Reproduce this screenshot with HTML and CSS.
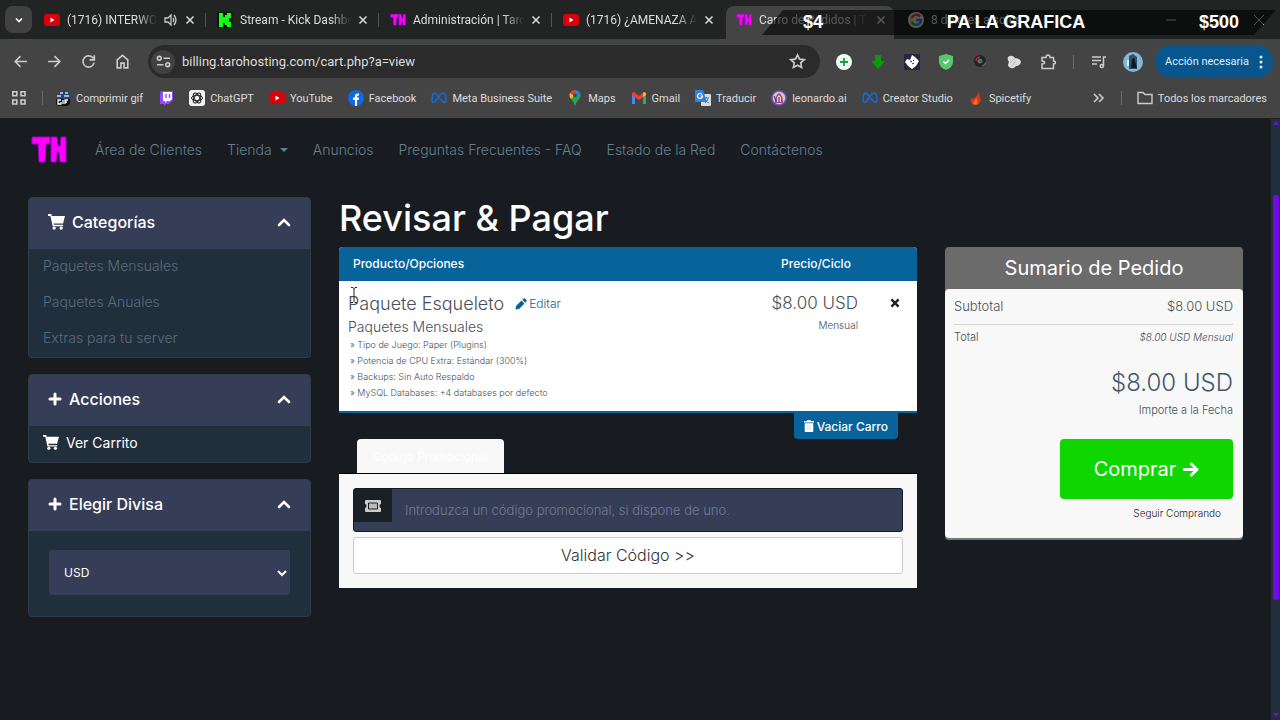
FILE: index.html
```html
<!DOCTYPE html>
<html lang="es">
<head>
    <meta charset="UTF-8">
    <meta name="viewport" content="width=device-width, initial-scale=1.0">
    <title>Carro de Pedidos | TaroHosting</title>
    <link rel="stylesheet" href="styles.css">
</head>
<body>
    <svg class="sprite" aria-hidden="true">
        <symbol id="youtube" viewBox="0 0 16 16"><rect y="2" width="16" height="12" rx="3" fill="#d9000c"/><path d="M6.500 5.500v5l4-2.500z" fill="#fff"/></symbol>
        <symbol id="th" viewBox="0 0 36 28"><path d="M1 1h18v7h-4l-1 18H8L7 8H1zM20 1h6l1 9h2l1-9h5v25h-6l-1-10h-2l-1 10h-5z" fill="#f0f" stroke="#90c" stroke-width="1"/></symbol>
        <symbol id="close" viewBox="0 0 10 10"><path d="M1.500 1.500l7 7M8.500 1.500l-7 7" fill="none" stroke="currentColor" stroke-width="1.500"/></symbol>
        <symbol id="meta" viewBox="0 0 16 16"><path d="M8 8C6 4.500 5 3 3.700 3 2 3 1 6.500 1 9.500c0 3.500 2.500 3.500 4 1L8 6c1.300-2 2.500-3 3.700-3C14 3 15 6.500 15 9.500c0 3.500-2.500 3.500-4 1z" fill="none" stroke="#1668d8" stroke-width="1.600"/></symbol>
        <symbol id="cart" viewBox="0 0 18 17"><path d="M0 0h3.500l.6 2H18l-2 8H6l.4 1.500H16V13H5L2.500 2H0z"/><circle cx="6.500" cy="15" r="1.800"/><circle cx="14" cy="15" r="1.800"/></symbol>
        <symbol id="plus" viewBox="0 0 14 14"><path d="M7 2v10M2 7h10" fill="none" stroke="currentColor" stroke-width="3" stroke-linecap="round"/></symbol>
        <symbol id="up" viewBox="0 0 14 10"><path d="M2 8l5-5 5 5" fill="none" stroke="currentColor" stroke-width="2.600" stroke-linecap="round"/></symbol>
    </svg>

    <header class="browser">
        <div class="tabs">
            <button class="tab-search" aria-label="Buscar pestañas"><svg viewBox="0 0 10 10" width="10" height="10"><path d="M2 3.500l3 3 3-3" fill="none" stroke="#fff" stroke-width="1.600"/></svg></button>
            <div class="tab">
                <svg class="fav"><use href="#youtube"/></svg>
                <span class="tab-title">(1716) INTERWORLD</span>
                <svg class="sound" viewBox="0 0 14 14"><path d="M1 5h3l3-3v10L4 9H1z" fill="none" stroke="#ccc" stroke-width="1.300"/><path d="M9 5q1.500 2 0 4M10 2q4 5 0 10" fill="none" stroke="#ccc" stroke-width="1.300"/></svg>
                <button class="tab-close" aria-label="Cerrar"><svg><use href="#close"/></svg></button>
            </div>
            <div class="tab">
                <svg class="fav" viewBox="0 0 16 16"><rect width="16" height="16" rx="2" fill="#0b160b"/><path d="M2 1h4v4h2V3h2V1h4v5h-2v4h2v5h-4v-2H8v-2H6v4H2z" fill="#1f1"/></svg>
                <span class="tab-title">Stream - Kick Dashboard</span>
                <button class="tab-close" aria-label="Cerrar"><svg><use href="#close"/></svg></button>
            </div>
            <div class="tab">
                <svg class="fav"><use href="#th"/></svg>
                <span class="tab-title">Administración | TaroHosting</span>
                <button class="tab-close" aria-label="Cerrar"><svg><use href="#close"/></svg></button>
            </div>
            <div class="tab">
                <svg class="fav"><use href="#youtube"/></svg>
                <span class="tab-title">(1716) ¿AMENAZA ALIEN</span>
                <button class="tab-close" aria-label="Cerrar"><svg><use href="#close"/></svg></button>
            </div>
            <div class="tab active">
                <svg class="fav"><use href="#th"/></svg>
                <span class="tab-title">Carro de Pedidos | TaroHosting</span>
                <button class="tab-close" aria-label="Cerrar"><svg><use href="#close"/></svg></button>
            </div>
            <div class="tab last">
                <svg class="fav" viewBox="0 0 16 16"><circle cx="8" cy="8" r="8" fill="#ddd"/><g fill="none" stroke-width="2.400"><path d="M12 4.500A5 5 0 0 0 3.600 6" stroke="#e33"/><path d="M3.600 6a5 5 0 0 0 0 4" stroke="#fb0"/><path d="M3.600 10a5 5 0 0 0 7.400 2" stroke="#2a4"/><path d="M8 8h5q0 2.500-2 4" stroke="#37e"/></g></svg>
                <span class="tab-title">8 dolares a soles</span>
            </div>
            <button class="new-tab" aria-label="Nueva pestaña"><svg viewBox="0 0 10 10"><path d="M5 0v10M0 5h10" stroke="#bbb"/></svg></button>
            <div class="window-buttons">
                <button aria-label="Minimizar"><svg viewBox="0 0 10 10"><path d="M0 5h10" stroke="#ccc"/></svg></button>
                <button aria-label="Maximizar"><svg viewBox="0 0 10 10"><path d="M.5.5h9v9h-9z" fill="none" stroke="#ccc"/></svg></button>
                <button aria-label="Cerrar"><svg viewBox="0 0 10 10"><path d="M0 0l10 10M10 0L0 10" stroke="#ccc"/></svg></button>
            </div>
            <!-- stream donation goal -->
            <div class="goal">
                <span>$4</span>
                <span class="goal-name">PA LA GRAFICA</span>
                <span>$500</span>
            </div>
        </div>

        <div class="toolbar">
            <button class="tool" aria-label="Atrás"><svg viewBox="0 0 16 16"><path d="M14 8H3M8 3L3 8l5 5"/></svg></button>
            <button class="tool" aria-label="Adelante"><svg viewBox="0 0 16 16"><path d="M2 8h11M8 3l5 5-5 5"/></svg></button>
            <button class="tool" aria-label="Recargar"><svg viewBox="0 0 16 16"><path d="M12.500 5A5.300 5.300 0 1 0 13.300 9M13.500 2v4.500H9"/></svg></button>
            <button class="tool" aria-label="Inicio"><svg viewBox="0 0 16 16"><path d="M3 14V6.500l5-4.300 5 4.300V14H9.500V9.500h-3V14z"/></svg></button>
            <div class="omnibox">
                <button class="site-info" aria-label="Información del sitio"><svg viewBox="0 0 16 16"><circle cx="4" cy="5" r="1.800"/><path d="M8 5h6M2 11h6"/><circle cx="12" cy="11" r="1.800"/></svg></button>
                <input class="url" type="text" aria-label="Dirección" value="billing.tarohosting.com/cart.php?a=view">
                <button class="star" aria-label="Guardar en marcadores"><svg viewBox="0 0 16 16"><path d="M8 1.800l1.900 4 4.400.5-3.300 3 .9 4.400L8 11.500l-3.900 2.200.9-4.400-3.300-3 4.400-.5z"/></svg></button>
            </div>
            <div class="extensions">
                <svg viewBox="0 0 16 16"><circle cx="8" cy="8" r="8" fill="#eefcf0"/><path d="M8 4v8M4 8h8" stroke="#1a9c4a" stroke-width="1.800"/></svg>
                <svg viewBox="0 0 16 16"><path d="M5 1h6v6h4l-7 8-7-8h4z" fill="#0b9a08"/></svg>
                <svg viewBox="0 0 16 16"><rect width="16" height="16" fill="#292641"/><path d="M8 1l3 2 4 4-3 5-4 3-4-3-3-4 2-3 3 1z" fill="#fff"/><path d="M6 7l2 1M9 6l1 1M8 10l2-1" stroke="#292641"/></svg>
                <svg viewBox="0 0 16 16"><path d="M8 0l7 2v6q0 5-7 8-7-3-7-8V2z" fill="#58c66c"/><path d="M5.500 7.500l2 2 3.500-3.500" fill="none" stroke="#fff" stroke-width="1.400"/></svg>
                <svg viewBox="0 0 16 16"><circle cx="8" cy="7" r="6" fill="#222"/><path d="M4 7a4 4 0 0 1 4-4" fill="none" stroke="#d22" stroke-width="1.500"/><circle cx="8" cy="7" r="2.500" fill="#45716e"/><path d="M10 12q3-1 4-4" fill="none" stroke="#777"/></svg>
                <svg viewBox="0 0 16 16"><path d="M2 3q4-3 7 1 5 0 6 4-1 4-5 4-3 4-7 1-2-2 0-5-2-3-1-5z" fill="#ddd"/><path d="M4 9l5-5M6 12l4-5" stroke="#bbb"/></svg>
                <svg viewBox="0 0 16 16" class="outline"><path d="M2 3.500h4q0-2.500 2-2.500t2 2.500h3.500V7q2 0 2 1.500t-2 1.500v4.500H2V10q2.500 0 2.500-1.500T2 7z"/></svg>
                <span class="sep"></span>
                <svg viewBox="0 0 16 16" class="outline"><path d="M1 3h9M1 6.500h9M1 10h5M12.500 12V3H15"/><circle cx="10.800" cy="12" r="1.600"/></svg>
                <svg viewBox="0 0 20 20" class="avatar"><circle cx="10" cy="10" r="10" fill="#80b9d9"/><path d="M6 4l4-2 4 3v12H6z" fill="#315067"/><path d="M9 7q3-3 3 2l2 7H8z" fill="#101820"/><path d="M5 8v6" stroke="#d8f0f8" stroke-width="2"/></svg>
            </div>
            <button class="action">Acción necesaria <svg viewBox="0 0 4 16"><circle cx="2" cy="3" r="1.500"/><circle cx="2" cy="8" r="1.500"/><circle cx="2" cy="13" r="1.500"/></svg></button>
        </div>

        <nav class="bookmarks">
            <button class="apps" aria-label="Aplicaciones"><svg viewBox="0 0 16 16"><path d="M1.800 1.800h4v4h-4zM10 1.800h4v4h-4zM1.800 10h4v4h-4zM10 10h4v4h-4z" fill="none" stroke="#ccc" stroke-width="1.600"/></svg></button>
            <span class="sep"></span>
            <a href="#"><svg viewBox="0 0 16 16"><path d="M4 1h10v8H4z" fill="#24426e"/><path d="M5 3h3M10 3h3M2 6h4M9 6h5" stroke="#9db7da" stroke-width="2"/><path d="M1 9h14v5l-3 2H3l-2-2z" fill="#111"/><path d="M6 10H3v4h3v-2M8 10v4M13 10h-3v4M10 12h2" fill="none" stroke="#fff" stroke-width="1.300"/></svg>Comprimir gif</a>
            <a href="#" aria-label="Twitch"><svg viewBox="0 0 16 16"><path d="M3 1h12v9l-4 4H8l-2 2v-2H2V4z" fill="#9146ff"/><path d="M5 2h9v7l-2 2H9l-2 2v-2H5z" fill="#fff"/><path d="M8 4v4M11.500 4v4" stroke="#9146ff" stroke-width="1.400"/></svg></a>
            <a href="#"><svg viewBox="0 0 16 16"><rect width="16" height="16" rx="3" fill="#f2f2f2"/><g fill="none" stroke="#222"><ellipse cx="8" cy="8" rx="5.500" ry="2.700"/><ellipse cx="8" cy="8" rx="5.500" ry="2.700" transform="rotate(60 8 8)"/><ellipse cx="8" cy="8" rx="5.500" ry="2.700" transform="rotate(120 8 8)"/></g></svg>ChatGPT</a>
            <a href="#"><svg><use href="#youtube"/></svg>YouTube</a>
            <a href="#"><svg viewBox="0 0 16 16"><circle cx="8" cy="8" r="8" fill="#1269e8"/><path d="M7 16v-6H5V7.500h2V6q0-3 4-2.500v2q-2-.2-2 1v1h2L10.600 10H9v6z" fill="#fff"/></svg>Facebook</a>
            <a href="#"><svg><use href="#meta"/></svg>Meta Business Suite</a>
            <a href="#"><svg viewBox="0 0 16 16"><path d="M8 0a5.500 5.500 0 0 0-5 3l5 3z" fill="#e33b2e"/><path d="M8 0a5.500 5.500 0 0 1 5 3L8 6z" fill="#2f7de8"/><path d="M3 3q-1.500 3 1 6l4-3z" fill="#fbbc04"/><path d="M13 3q1.500 3-1 6-3 3-4 7-1-4-4-7l4-3z" fill="#28a84c"/><circle cx="8" cy="5.500" r="2" fill="#184fa5"/></svg>Maps</a>
            <a href="#"><svg viewBox="0 0 16 16"><path d="M1 4h3v10H1z" fill="#4285f4"/><path d="M12 4h3v10h-3z" fill="#34a853"/><path d="M1 3l2-1 5 4 5-4 2 1v2L8 10 1 5z" fill="#ea4335"/><path d="M12 3l1-1 2 1v2l-3 2z" fill="#fbbc04"/></svg>Gmail</a>
            <a href="#"><svg viewBox="0 0 16 16"><rect x="6" y="4" width="10" height="12" rx="1" fill="#d8dadd"/><path d="M9 8h5M11.500 7v1M10 13q3-2 3-5M10 9q1 3 4 4" fill="none" stroke="#657b91"/><path d="M1 0h7l4 12H1q-1 0-1-1V1q0-1 1-1z" fill="#2e82e4"/><path d="M7 4.500A2.500 2.500 0 1 0 7.500 6H5.500" fill="none" stroke="#fff" stroke-width="1.200"/></svg>Traducir</a>
            <a href="#"><svg viewBox="0 0 16 16"><circle cx="8" cy="8" r="7" fill="#d9c7c5" stroke="#6c54bb" stroke-width="1.500"/><path d="M4 13q0-8 4-10 4 2 4 10" fill="#a33ba7"/><path d="M6 12V7l2-2 2 2v5z" fill="#ead294"/><path d="M8 7v5M3 6l2 5" stroke="#27355d"/></svg>leonardo.ai</a>
            <a href="#"><svg><use href="#meta"/></svg>Creator Studio</a>
            <a href="#"><svg viewBox="0 0 16 16"><path d="M11 1q0 4 1 6 2 6-3 8-8 1-6-7l2 1q4-2 6-8z" fill="#d93715"/><path d="M8 8q3 4 0 7-3-1-3-3 2 0 3-4z" fill="#f57826"/></svg>Spicetify</a>
            <button class="more" aria-label="Más marcadores"><svg viewBox="0 0 16 16"><path d="M4 4l4 4-4 4M9 4l4 4-4 4" fill="none" stroke="#ccc" stroke-width="1.600"/></svg></button>
            <span class="sep"></span>
            <a href="#" class="all"><svg viewBox="0 0 16 16"><path d="M1 13.500v-11h5l2 2h7v9z" fill="none" stroke="#ccc" stroke-width="1.400"/></svg>Todos los marcadores</a>
        </nav>
    </header>

    <div class="viewport">
        <div class="site">
            <nav class="navbar">
                <a href="#" class="logo" aria-label="TaroHosting"><svg><use href="#th"/></svg></a>
                <a href="#">Área de Clientes</a>
                <a href="#" class="dropdown">Tienda</a>
                <a href="#">Anuncios</a>
                <a href="#">Preguntas Frecuentes - FAQ</a>
                <a href="#">Estado de la Red</a>
                <a href="#">Contáctenos</a>
            </nav>

            <div class="columns">
                <aside class="sidebar">
                    <section class="card">
                        <h3><svg class="cart"><use href="#cart"/></svg>Categorías<svg class="up"><use href="#up"/></svg></h3>
                        <a href="#">Paquetes Mensuales</a>
                        <a href="#">Paquetes Anuales</a>
                        <a href="#">Extras para tu server</a>
                    </section>
                    <section class="card">
                        <h3><svg class="plus"><use href="#plus"/></svg>Acciones<svg class="up"><use href="#up"/></svg></h3>
                        <a href="#" class="bright"><svg class="cart small"><use href="#cart"/></svg>Ver Carrito</a>
                    </section>
                    <section class="card">
                        <h3><svg class="plus"><use href="#plus"/></svg>Elegir Divisa<svg class="up"><use href="#up"/></svg></h3>
                        <div class="currency">
                            <select aria-label="Elegir Divisa">
                                <option>USD</option>
                            </select>
                            <svg class="down" viewBox="0 0 10 8"><path d="M1 2l4 4 4-4" fill="none" stroke="#fff" stroke-width="2"/></svg>
                        </div>
                    </section>
                </aside>

                <main>
                    <h1>Revisar &amp; Pagar</h1>
                    <table class="products">
                        <thead>
                            <tr><th>Producto/Opciones</th><th class="price">Precio/Ciclo</th><th class="remove"></th></tr>
                        </thead>
                        <tbody>
                            <tr>
                                <td>
                                    <div class="product-name">Paquete Esqueleto <a href="#"><svg viewBox="0 0 12 12"><path d="M1 8l5.500-5.500 3 3L4 11l-3.500.5zM7.300 1.700L8.500.5q.8-.5 1.500 0l1.500 1.500q.5.800 0 1.500l-1.200 1.200z" fill="#08639a"/></svg>Editar</a></div>
                                    <div class="product-group">Paquetes Mensuales</div>
                                    <ul>
                                        <li>» Tipo de Juego: Paper (Plugins)</li>
                                        <li>» Potencia de CPU Extra: Estándar (300%)</li>
                                        <li>» Backups: Sin Auto Respaldo</li>
                                        <li>» MySQL Databases: +4 databases por defecto</li>
                                    </ul>
                                </td>
                                <td class="price">
                                    <div class="amount">$8.00 USD</div>
                                    <div class="cycle">Mensual</div>
                                </td>
                                <td class="remove"><button aria-label="Eliminar"><svg viewBox="0 0 10 10"><path d="M2 2l6 6M8 2L2 8" stroke="#222" stroke-width="2"/></svg></button></td>
                            </tr>
                        </tbody>
                    </table>
                    <div class="empty-row">
                        <button class="empty"><svg viewBox="0 0 10 12"><path d="M0 1h3l.5-1h3L7 1h3v1.500H0zM.700 3.300h8.600V11q0 1-1 1H1.700q-1 0-1-1z" fill="#fff"/><path d="M3.300 5v5.500M5 5v5.500M6.700 5v5.500" stroke="#bcd" stroke-width=".5"/></svg>Vaciar Carro</button>
                    </div>

                    <div class="promo-tabs"><button class="promo-tab">Código Promocional</button></div>
                    <form class="promo" onsubmit="event.preventDefault();">
                        <div class="promo-field">
                            <label for="promocode" aria-label="Código promocional"><svg viewBox="0 0 16 12"><path d="M1 0h14q1 0 1 1v3q-1.500 0-1.500 2T16 8v3q0 1-1 1H1q-1 0-1-1V8q1.500 0 1.500-2T0 4V1q0-1 1-1z" fill="#ccc"/><path d="M3.500 3h9v6h-9z" fill="#bbb" stroke="#192126"/></svg></label>
                            <input type="text" id="promocode" placeholder="Introduzca un código promocional, si dispone de uno.">
                        </div>
                        <button type="submit">Validar Código &gt;&gt;</button>
                    </form>
                </main>

                <aside class="summary">
                    <h2>Sumario de Pedido</h2>
                    <div class="summary-body">
                        <div class="line subtotal"><span>Subtotal</span><span>$8.00 USD</span></div>
                        <div class="line total"><span>Total</span><em>$8.00 USD Mensual</em></div>
                        <div class="due">$8.00 USD</div>
                        <div class="due-label">Importe a la Fecha</div>
                        <button class="buy">Comprar <svg viewBox="0 0 18 18"><path d="M1 9h14M9 2l7 7-7 7" fill="none" stroke="#fff" stroke-width="3"/></svg></button>
                        <a href="#" class="continue">Seguir Comprando</a>
                    </div>
                </aside>
            </div>
        </div>
        <div class="scrollbar">
            <svg viewBox="0 0 6 4"><path d="M0 4l3-4 3 4z"/></svg>
            <div class="thumb"></div>
            <svg viewBox="0 0 6 4"><path d="M0 0l3 4 3-4z"/></svg>
        </div>
        <svg class="cursor" viewBox="0 0 8 16"><path d="M1 .5h2l1 1 1-1h2M4 1v13M1 15.500h2l1-1 1 1h2" fill="none" stroke="#222"/></svg>
    </div>
</body>
</html>
```

FILE: styles.css
```css
* {
    box-sizing: border-box;
}

body {
    margin: 0;
    height: 100vh;
    display: flex;
    flex-direction: column;
    overflow: hidden;
    background-color: #181c20;
    font-family: Inter, "Liberation Sans", sans-serif;
    font-size: 14px;
    font-weight: 300;
}

button, input, select {
    font: inherit;
    color: inherit;
    border: none;
    background: none;
    padding: 0;
    margin: 0;
}

button {
    cursor: pointer;
}

a {
    color: inherit;
    text-decoration: none;
}

svg {
    display: block;
    flex: none;
}

.sprite {
    position: absolute;
    width: 0;
    height: 0;
}

/* browser window */
.browser {
    flex: none;
    background-color: #444;
    border-bottom: 1px solid #202222;
    font-family: Roboto, "Open Sans", sans-serif;
    font-size: 11px;
    font-weight: 400;
    color: #ddd;
}

.tabs {
    position: relative;
    display: flex;
    height: 39px;
    padding-left: 5px;
    background-color: #222423;
    font-size: 12px;
}

.tab-search {
    width: 27px;
    height: 27px;
    margin: 6px 2px 0 0;
    border-radius: 8px;
    background-color: #414141;
    display: grid;
    place-items: center;
}

.tab {
    position: relative;
    width: 173px;
    margin-top: 6px;
    padding: 0 12px 5px 10px;
    display: flex;
    align-items: center;
    gap: 7px;
}

.tab:not(:nth-child(n+5))::after {
    content: "";
    position: absolute;
    right: 1px;
    top: 7px;
    width: 1px;
    height: 14px;
    background-color: #555;
}

.tab.active {
    width: 168px;
    margin-right: 4px;
    padding-right: 8px;
    background-color: #444;
    border-radius: 8px 8px 0 0;
}

.tab.last {
    width: 176px;
}

.fav {
    width: 16px;
    height: 16px;
}

.tab-title {
    flex: 1;
    min-width: 0;
    overflow: hidden;
    white-space: nowrap;
    mask-image: linear-gradient(to left, transparent, #000 20px);
}

.sound {
    width: 14px;
    height: 14px;
}

.tab-close svg {
    width: 10px;
    height: 10px;
}

.new-tab svg, .window-buttons svg {
    width: 10px;
    height: 10px;
}

.window-buttons {
    margin-left: auto;
    padding-right: 16px;
    display: flex;
    gap: 34px;
}

.goal {
    position: absolute;
    left: 762px;
    right: 4px;
    top: 10px;
    height: 25px;
    padding: 0 37px 0 41px;
    display: flex;
    justify-content: space-between;
    align-items: center;
    background-color: rgba(0, 0, 0, 0.6);
    clip-path: polygon(21px 0, 100% 0, calc(100% - 22px) 100%, 0 100%);
    color: #fff;
    font-family: "Liberation Sans", Arial, sans-serif;
    font-size: 18px;
    font-weight: 700;
}

.goal-name {
    padding-left: 10px;
}

.toolbar {
    display: flex;
    align-items: center;
    height: 45px;
    padding: 0 7px 0 12px;
}

.tool {
    width: 34px;
}

.tool svg, .star svg, .site-info svg, .outline {
    fill: none;
    stroke: #ccc;
    stroke-width: 1.5px;
}

.tool svg, .star svg, .site-info svg {
    width: 17px;
    height: 17px;
}

.omnibox {
    flex: 1;
    height: 33px;
    padding: 0 14px 0 3px;
    display: flex;
    align-items: center;
    gap: 7px;
    border-radius: 17px;
    background-color: #2b2b2b;
}

.site-info {
    width: 24px;
    height: 24px;
    border-radius: 50%;
    background-color: #414141;
    display: grid;
    place-items: center;
}

.url {
    flex: 1;
    min-width: 0;
    font-size: 13px;
}

.extensions {
    display: flex;
    align-items: center;
    gap: 18px;
    padding: 0 12px 0 16px;
}

.extensions svg {
    width: 16px;
    height: 16px;
}

.extensions .avatar {
    width: 20px;
    height: 20px;
    margin-left: -2px;
}

.sep {
    width: 1px;
    height: 14px;
    background-color: #6a6a6a;
}

.extensions .sep {
    margin: 0 -1px;
}

.action {
    height: 33px;
    padding: 0 10px;
    display: flex;
    align-items: center;
    gap: 10px;
    border-radius: 17px;
    background-color: #08568d;
    color: #dceefa;
    white-space: nowrap;
}

.action svg {
    width: 4px;
    height: 16px;
    fill: #dceefa;
}

.bookmarks {
    display: flex;
    align-items: center;
    gap: 15px;
    height: 34px;
    padding: 0 13px 6px 11px;
    white-space: nowrap;
}

.bookmarks a {
    display: flex;
    align-items: center;
    gap: 5px;
}

.bookmarks svg {
    width: 16px;
    height: 16px;
}

.apps + .sep {
    margin-right: -3px;
}

.more {
    margin-left: auto;
}

/* page */
.viewport {
    position: relative;
    flex: 1;
    min-height: 0;
    display: flex;
}

.site {
    flex: 1;
    padding: 0 28px;
}

.scrollbar {
    width: 9px;
    padding: 2px 1px 3px 2px;
    display: flex;
    flex-direction: column;
    background-color: #212e3c;
    fill: #7209e8;
}

.scrollbar svg {
    width: 6px;
    height: 4px;
}

.thumb {
    height: 405px;
    margin: 70px 0 auto;
    background-color: #7209e8;
    border-radius: 2px;
}

.cursor {
    position: absolute;
    left: 350px;
    top: 168px;
    width: 8px;
    height: 16px;
}

.navbar {
    display: flex;
    align-items: center;
    gap: 25px;
    height: 62px;
    padding-bottom: 1px;
    color: #638090;
}

.logo svg {
    width: 42px;
    height: 28px;
}

.dropdown::after {
    content: "";
    display: inline-block;
    margin-left: 8px;
    vertical-align: 3px;
    border: 4px solid transparent;
    border-top-color: currentColor;
    border-bottom: none;
}

.columns {
    display: grid;
    grid-template-columns: 283fr 578fr 298fr;
    align-items: start;
    gap: 28px;
    padding-top: 16px;
}

.sidebar {
    display: flex;
    flex-direction: column;
    gap: 16px;
}

.card {
    border: 1px solid #2f3b48;
    border-radius: 4px;
    background-color: #212e3c;
    overflow: hidden;
}

.card h3 {
    margin: 0;
    height: 51px;
    padding: 0 19px 3px;
    display: flex;
    align-items: center;
    gap: 7px;
    background-color: #363d57;
    color: #fff;
    font-size: 16px;
    font-weight: 500;
}

.card > a {
    display: flex;
    align-items: center;
    gap: 7px;
    height: 36px;
    padding: 0 14px 3px;
    color: #5b6c7b;
}

.card > a.bright {
    color: #fff;
    font-weight: 400;
}

.cart {
    width: 17px;
    height: 16px;
    fill: #fff;
}

.cart.small {
    width: 16px;
    height: 15px;
}

.plus {
    width: 14px;
    height: 14px;
}

.up {
    width: 14px;
    height: 10px;
    margin-left: auto;
}

.currency {
    position: relative;
    padding: 19px 20px 21px;
}

.currency select {
    width: 100%;
    height: 45px;
    padding: 0 15px;
    appearance: none;
    border-radius: 3px;
    background-color: #363d57;
    color: #fff;
    font-size: 12px;
    font-weight: 400;
}

.down {
    position: absolute;
    right: 23px;
    top: 38px;
    width: 10px;
    height: 8px;
}

h1 {
    margin: 0;
    line-height: 42px;
    padding-bottom: 8px;
    color: #fff;
    font-size: 36px;
    font-weight: 500;
}

.products {
    width: 100%;
    table-layout: fixed;
    border-collapse: separate;
    border-spacing: 0;
    border-bottom: 2px solid #08639a;
    background-color: #fff;
    border-radius: 4px 4px 0 0;
    overflow: hidden;
    color: #46505a;
}

.products th {
    height: 34px;
    padding: 0 14px 2px;
    background-color: #08639a;
    color: #fff;
    font-size: 12px;
    font-weight: 500;
    text-align: left;
}

.products .price {
    width: 102px;
    padding-left: 0;
    text-align: right;
    white-space: nowrap;
}

.products th.price {
    padding: 0 0 2px;
    text-align: center;
}

.products .remove {
    width: 50px;
}

.products td {
    padding: 10px 9px;
    vertical-align: top;
}

.products td.remove {
    padding: 14px 22px;
}

.remove svg {
    width: 12px;
    height: 12px;
}

.product-name {
    display: flex;
    align-items: center;
    gap: 11px;
    height: 25px;
    font-size: 18px;
}

.product-name a {
    display: flex;
    align-items: center;
    gap: 2px;
    color: #1d5c94;
    font-size: 12px;
}

.product-name svg {
    width: 12px;
    height: 12px;
}

.product-group {
    line-height: 21px;
}

.products ul {
    margin: 0;
    padding: 0 2px;
    list-style: none;
    font-size: 9px;
    line-height: 16px;
}

.amount {
    font-size: 17px;
    line-height: 25px;
}

.cycle {
    font-size: 10px;
    line-height: 18px;
}

.empty-row {
    display: flex;
    justify-content: flex-end;
    padding-right: 19px;
}

.empty {
    height: 26px;
    padding: 0 10px;
    display: flex;
    align-items: center;
    gap: 3px;
    border-radius: 0 0 4px 4px;
    background-color: #08639a;
    color: #fff;
    font-size: 12px;
    font-weight: 500;
}

.empty svg {
    width: 10px;
    height: 12px;
}

.promo-tabs {
    padding-left: 18px;
    border-bottom: 1px solid #000;
}

.promo-tab {
    display: block;
    height: 34px;
    padding: 0 16px;
    border-radius: 4px 4px 0 0;
    background-color: #f8f8f8;
    color: #fff;
    font-size: 12px;
    font-weight: 400;
}

.promo {
    padding: 14px;
    background-color: #f8f8f8;
}

.promo-field {
    display: flex;
    align-items: flex-start;
    height: 44px;
    border: 1px solid #111a22;
    border-radius: 3px;
    background-color: #363d57;
}

.promo-field label {
    width: 38px;
    height: 33px;
    display: grid;
    place-items: center;
    background-color: #192126;
}

.promo-field svg {
    width: 16px;
    height: 12px;
}

.promo-field input {
    flex: 1;
    height: 42px;
    padding: 0 13px;
    color: #fff;
    font-size: 13px;
}

.promo-field input::placeholder {
    color: #707b95;
}

.promo > button {
    width: 100%;
    height: 37px;
    margin-top: 5px;
    padding-bottom: 2px;
    border: 1px solid #ccc;
    border-radius: 3px;
    background-color: #fff;
    color: #333;
    font-size: 16px;
}

.summary {
    margin-top: 50px;
    border-radius: 4px;
    border-bottom: 2px solid #777;
    background-color: #6b6b6b;
    overflow: hidden;
}

.summary h2 {
    margin: 0;
    line-height: 42px;
    text-align: center;
    color: #fff;
    font-size: 20px;
    font-weight: 400;
}

.summary-body {
    padding: 0 10px 10px 9px;
    display: flex;
    flex-direction: column;
    align-items: flex-end;
    border-radius: 4px;
    background-color: #f8f8f8;
    color: #46505a;
}

.line {
    align-self: stretch;
    display: flex;
    justify-content: space-between;
}

.subtotal {
    line-height: 35px;
    border-bottom: 1px solid #d5d5d5;
    font-size: 13px;
}

.total {
    line-height: 25px;
    font-size: 11px;
}

.total em {
    font-size: 10px;
}

.due {
    margin-top: 17px;
    line-height: 32px;
    font-size: 24px;
    color: #45586a;
}

.due-label {
    line-height: 22px;
    font-size: 11px;
}

.buy {
    width: 173px;
    height: 60px;
    margin-top: 18px;
    display: flex;
    align-items: center;
    justify-content: center;
    gap: 6px;
    border-radius: 4px;
    background-color: #10d600;
    color: #fff;
    font-size: 20px;
    font-weight: 400;
}

.buy svg {
    width: 17px;
    height: 17px;
}

.continue {
    margin-right: 12px;
    line-height: 29px;
    color: #222;
    font-size: 10px;
}
```
